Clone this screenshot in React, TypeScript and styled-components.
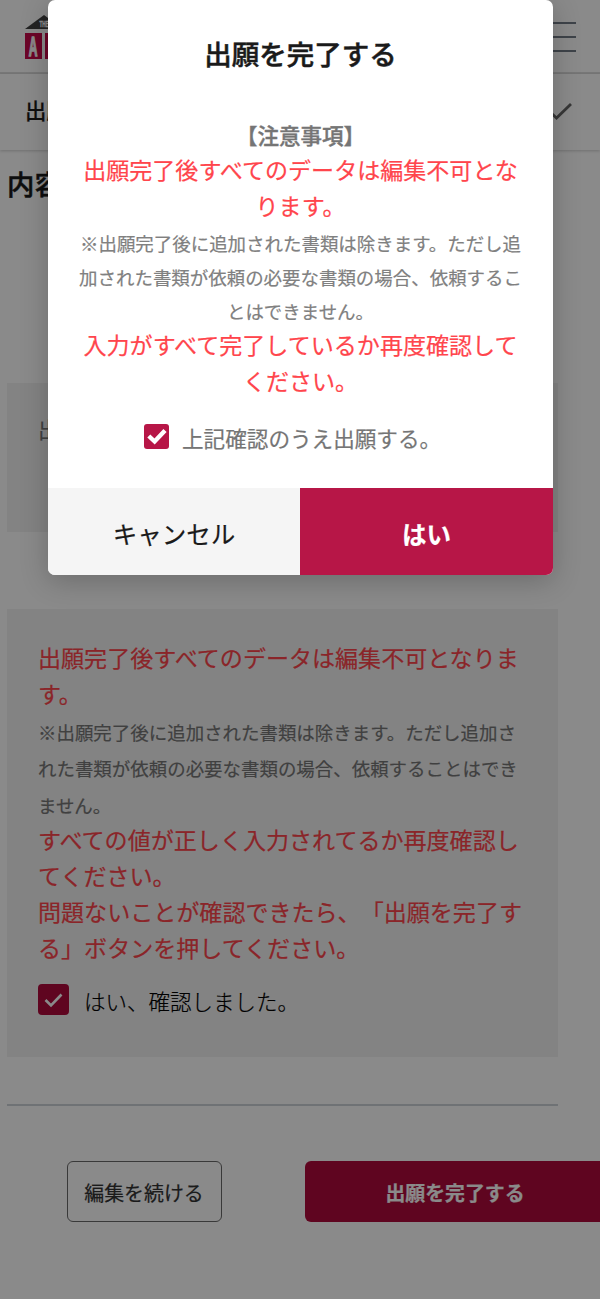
import React from "react";
import styled, { createGlobalStyle } from "styled-components";

const GlobalStyle = createGlobalStyle`
  *, *::before, *::after { box-sizing: border-box; }
  body {
    margin: 0;
    background: #fff;
    font-family: "Noto Sans CJK JP", sans-serif;
    color: #1a1a1a;
    text-spacing-trim: space-all;
    -webkit-text-stroke: 0.2px currentColor;
  }
  button { font-family: inherit; cursor: pointer; }
`;

const Screen = styled.div`
  position: relative;
  width: 600px;
  height: 1300px;
  overflow: hidden;
`;

const Header = styled.header`
  display: flex;
  justify-content: space-between;
  align-items: flex-start;
  height: 74px;
  padding: 14px 24px 0 24px;
  border-bottom: 2px solid #dedede;
`;

const MenuIcon = styled.div`
  display: flex;
  flex-direction: column;
  justify-content: space-between;
  width: 32px;
  height: 30px;
  margin-top: 8px;
`;

const MenuLine = styled.span`
  height: 2px;
  background: #747d87;
`;

const StageBar = styled.div`
  display: flex;
  justify-content: space-between;
  align-items: center;
  height: 76px;
  padding: 0 26px 0 25px;
  box-shadow: 0 1px 3px rgba(0, 0, 0, 0.2);
`;

const StageName = styled.span`
  padding-bottom: 5px;
  font-size: 21.4px;
  font-weight: 500;
`;

const Main = styled.main`
  display: flex;
  flex-direction: column;
  padding: 11px 42px 0 7px;
`;

const PageTitle = styled.h1`
  height: 44px;
  margin: 0 0 178px;
  font-size: 27.4px;
  line-height: 44px;
  font-weight: 500;
  -webkit-text-stroke-width: 0.5px;
`;

const Card = styled.section<{ $height: number; $top: number }>`
  height: ${(p) => p.$height}px;
  padding: ${(p) => p.$top}px 31px 0;
  background: #f3f3f3;
`;

const CardLabel = styled.div`
  font-size: 22px;
  line-height: 36px;
  color: #777;
`;

const Gap = styled.div`
  height: 77px;
`;

const Warning = styled.p<{ $shift?: number }>`
  margin: ${(p) => p.$shift ?? 0}px 0 ${(p) => -(p.$shift ?? 0)}px;
  font-size: 23.05px;
  line-height: 36px;
  color: #ff454c;
  white-space: nowrap;
`;

const Note = styled.p<{ $line: number; $color: string; $shift: number }>`
  margin: 0;
  padding: ${(p) => p.$shift}px 0 0;
  margin-bottom: ${(p) => -p.$shift}px;
  font-size: 18.47px;
  line-height: ${(p) => p.$line}px;
  color: ${(p) => p.$color};
  white-space: nowrap;
`;

const ConfirmRow = styled.label`
  display: flex;
  align-items: center;
  gap: 15px;
  margin-top: 16px;
  font-size: 21.5px;
  font-weight: 300;
  line-height: 36px;
  color: #000;
`;

const RowText = styled.span`
  padding-top: 3px;
`;

const CheckBox = styled.span<{ $size: number; $radius: number; $color: string }>`
  display: flex;
  align-items: center;
  justify-content: center;
  flex: none;
  width: ${(p) => p.$size}px;
  height: ${(p) => p.$size}px;
  border-radius: ${(p) => p.$radius}px;
  background: ${(p) => p.$color};
`;

const Divider = styled.hr`
  width: 551px;
  height: 2px;
  margin: 47px 0 0;
  border: 0;
  background: #cdd2d8;
`;

const Actions = styled.div`
  display: flex;
  gap: 83px;
  margin: 55px 0 0 60px;
`;

const ActionButton = styled.button<{ $primary?: boolean }>`
  flex: none;
  width: ${(p) => (p.$primary ? 330 : 155)}px;
  height: 61px;
  padding: ${(p) => (p.$primary ? "2px 110px 0 80px" : "2px 1px 0 0")};
  border: ${(p) => (p.$primary ? "0" : "1px solid #6a6a6a")};
  border-radius: 6px;
  background: ${(p) => (p.$primary ? "#b00b3c" : "#fff")};
  color: ${(p) => (p.$primary ? "#fff" : "#333")};
  font-size: 19.9px;
  font-weight: ${(p) => (p.$primary ? 700 : 400)};
  white-space: nowrap;
`;

const Overlay = styled.div`
  position: absolute;
  inset: 0 0 1px;
  padding-left: 48px;
  background: rgba(0, 0, 0, 0.46);
`;

const Dialog = styled.div`
  display: flex;
  flex-direction: column;
  width: 505px;
  height: 574.5px;
  border-radius: 7px;
  overflow: hidden;
  background: #fff;
  box-shadow: 0 6px 28px rgba(0, 0, 0, 0.22);
`;

const DialogTitle = styled.h2`
  margin: 0;
  padding-top: 31px;
  font-size: 27.5px;
  line-height: 44px;
  font-weight: 500;
  -webkit-text-stroke-width: 0.5px;
  text-align: center;
`;

const DialogBody = styled.div`
  flex: 1;
  padding-top: 43px;
  text-align: center;
`;

const NoticeHeading = styled.div`
  font-size: 21.5px;
  line-height: 34px;
  font-weight: 500;
  -webkit-text-stroke-width: 0.4px;
  color: #757575;
`;

const AgreeRow = styled.label`
  display: flex;
  align-items: center;
  gap: 13px;
  margin: 20px 0 0 96px;
  font-size: 21.6px;
  line-height: 34px;
  color: #757575;
`;

const DialogButtons = styled.div`
  display: grid;
  grid-template-columns: 252px 1fr;
  height: 86.5px;
`;

const DialogButton = styled.button<{ $primary?: boolean }>`
  padding: 4px 0 0;
  border: 0;
  background: ${(p) => (p.$primary ? "#b71647" : "#f5f5f5")};
  color: ${(p) => (p.$primary ? "#fff" : "#1a1a1a")};
  font-size: 24.5px;
  font-weight: ${(p) => (p.$primary ? 700 : 400)};
`;

const LogoText = {
  fontFamily: '"Liberation Sans", sans-serif',
  fontWeight: 700,
  fill: "#fff",
  stroke: "#fff",
};

const Logo = () => (
  <svg width="64" height="46" viewBox="0 0 64 46">
    <path d="M1 15 L20 1 L39 15 Z" fill="#424242" />
    <text transform="translate(15.6 13.4) scale(.48 1)" fontSize="9.4" strokeWidth="0.4" {...LogoText}>THE</text>
    <rect x="1" y="19" width="17" height="26" fill="#c80a4a" />
    <rect x="21" y="19" width="17" height="26" fill="#c80a4a" />
    <text transform="translate(4.8 41.5) scale(.43 1)" fontSize="28" strokeWidth="1.6" {...LogoText}>A</text>
  </svg>
);

const Tick = ({ size, width, color, d }: { size: number; width: number; color: string; d: string }) => (
  <svg width={size} height={size} viewBox={`0 0 ${size} ${size}`} fill="none" stroke={color} strokeWidth={width}>
    <path d={d} />
  </svg>
);

export default function App() {
  return (
    <>
      <GlobalStyle />
      <Screen>
        <Header>
          <Logo />
          <MenuIcon>
            <MenuLine />
            <MenuLine />
            <MenuLine />
          </MenuIcon>
        </Header>
        <StageBar>
          <StageName>出願</StageName>
          <Tick size={26} width={2.8} color="#666" d="M2 13 L8.5 19 L23 5" />
        </StageBar>
        <Main>
          <PageTitle>内容</PageTitle>
          <Card $height={149} $top={27}>
            <CardLabel>出願</CardLabel>
          </Card>
          <Gap />
          <Card $height={448} $top={30}>
            <Warning>
              出願完了後すべてのデータは編集不可となりま
              <br />
              す。
            </Warning>
            <Note $line={36.4} $color="#777" $shift={3}>
              ※出願完了後に追加された書類は除きます。ただし追加さ
              <br />
              れた書類が依頼の必要な書類の場合、依頼することはでき
              <br />
              ません。
            </Note>
            <Warning $shift={1}>
              すべての値が正しく入力されてるか再度確認し
              <br />
              てください。
              <br />
              問題ないことが確認できたら、「出願を完了す
              <br />
              る」ボタンを押してください。
            </Warning>
            <ConfirmRow>
              <CheckBox $size={31} $radius={4} $color="#b00b3c">
                <Tick size={31} width={2.6} color="#fff" d="M7.5 16 L13 21.5 L23.5 10.5" />
              </CheckBox>
              <RowText>はい、確認しました。</RowText>
            </ConfirmRow>
          </Card>
          <Divider />
          <Actions>
            <ActionButton>編集を続ける</ActionButton>
            <ActionButton $primary>出願を完了する</ActionButton>
          </Actions>
        </Main>
        <Overlay>
          <Dialog>
            <DialogTitle>出願を完了する</DialogTitle>
            <DialogBody>
              <NoticeHeading>【注意事項】</NoticeHeading>
              <Warning $shift={-1}>
                出願完了後すべてのデータは編集不可とな
                <br />
                ります。
              </Warning>
              <Note $line={34} $color="#808080" $shift={2}>
                ※出願完了後に追加された書類は除きます。ただし追
                <br />
                加された書類が依頼の必要な書類の場合、依頼するこ
                <br />
                とはできません。
              </Note>
              <Warning>
                入力がすべて完了しているか再度確認して
                <br />
                ください。
              </Warning>
              <AgreeRow>
                <CheckBox $size={25} $radius={3} $color="#b71647">
                  <Tick size={25} width={4.4} color="#fff" d="M4.8 12 L10.6 17.5 L21 6.4" />
                </CheckBox>
                <RowText>上記確認のうえ出願する。</RowText>
              </AgreeRow>
            </DialogBody>
            <DialogButtons>
              <DialogButton>キャンセル</DialogButton>
              <DialogButton $primary>はい</DialogButton>
            </DialogButtons>
          </Dialog>
        </Overlay>
      </Screen>
    </>
  );
}
